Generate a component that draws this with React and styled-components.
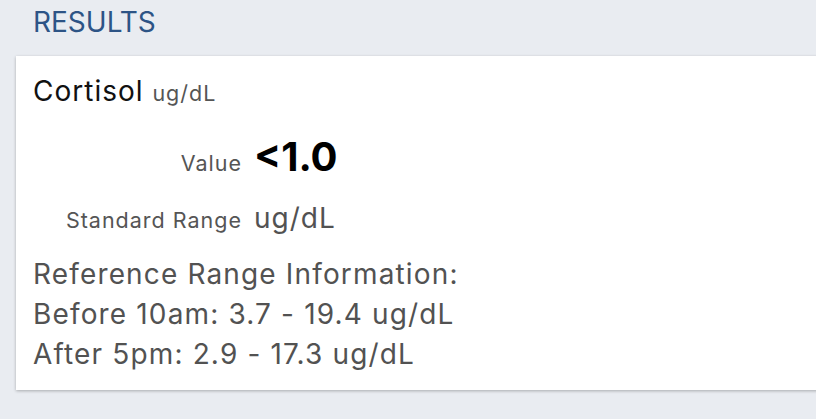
import React from "react";
import styled, { createGlobalStyle } from "styled-components";

const GlobalStyle = createGlobalStyle`
  body {
    margin: 0;
    background: #e9ecf1;
    font-family: Inter, "Liberation Sans", sans-serif;
    overflow: hidden;
  }
`;

const rows = [
  { label: "Value", value: "<1.0", strong: true },
  { label: "Standard Range", value: "ug/dL" },
];

const referenceLines = [
  "Reference Range Information:",
  "Before 10am: 3.7 - 19.4 ug/dL",
  "After 5pm: 2.9 - 17.3 ug/dL",
];

const App = () => {
  return (
    <Page>
      <GlobalStyle />
      <SectionTitle>RESULTS</SectionTitle>
      <Card>
        <TestName>
          Cortisol <Unit>ug/dL</Unit>
        </TestName>
        <ValueGrid>
          {rows.map((row) => (
            <React.Fragment key={row.label}>
              <Label>{row.label}</Label>
              <Value $strong={row.strong}>{row.value}</Value>
            </React.Fragment>
          ))}
        </ValueGrid>
        <Reference>
          {referenceLines.map((line) => (
            <div key={line}>{line}</div>
          ))}
        </Reference>
      </Card>
    </Page>
  );
};

export default App;

const Page = styled.div`
  width: 816px;
  height: 419px;
  display: flex;
  flex-direction: column;
`;

const SectionTitle = styled.h2`
  margin: 0;
  padding: 2px 0 0 33px;
  height: 56px;
  box-sizing: border-box;
  font-size: 28px;
  line-height: 40px;
  font-weight: 400;
  color: #2d5486;
`;

const Card = styled.div`
  margin-left: 16px;
  width: 820px;
  height: 334px;
  flex-shrink: 0;
  box-sizing: border-box;
  background: #fff;
  box-shadow: 0 1px 3px rgba(0, 0, 0, 0.28);
  padding: 15px 17px 0;
`;

const TestName = styled.div`
  font-size: 28px;
  line-height: 40px;
  letter-spacing: 1px;
  color: #111;
`;

const Unit = styled.span`
  font-size: 21.5px;
  letter-spacing: 1px;
  color: #555;
`;

const ValueGrid = styled.div`
  display: grid;
  grid-template-columns: 209px 1fr;
  column-gap: 12px;
  row-gap: 17px;
  align-items: baseline;
  margin-top: 20px;
`;

const Label = styled.div`
  text-align: right;
  font-size: 21.5px;
  letter-spacing: 1px;
  color: #555;
`;

const Value = styled.div`
  font-size: ${(p) => (p.$strong ? "40px" : "28px")};
  font-weight: ${(p) => (p.$strong ? 700 : 400)};
  line-height: ${(p) => (p.$strong ? "48px" : "40px")};
  letter-spacing: ${(p) => (p.$strong ? "0" : "1px")};
  color: ${(p) => (p.$strong ? "#000" : "#525252")};
`;

const Reference = styled.div`
  margin-top: 16px;
  font-size: 28px;
  line-height: 40px;
  letter-spacing: 1.15px;
  color: #525252;
`;
